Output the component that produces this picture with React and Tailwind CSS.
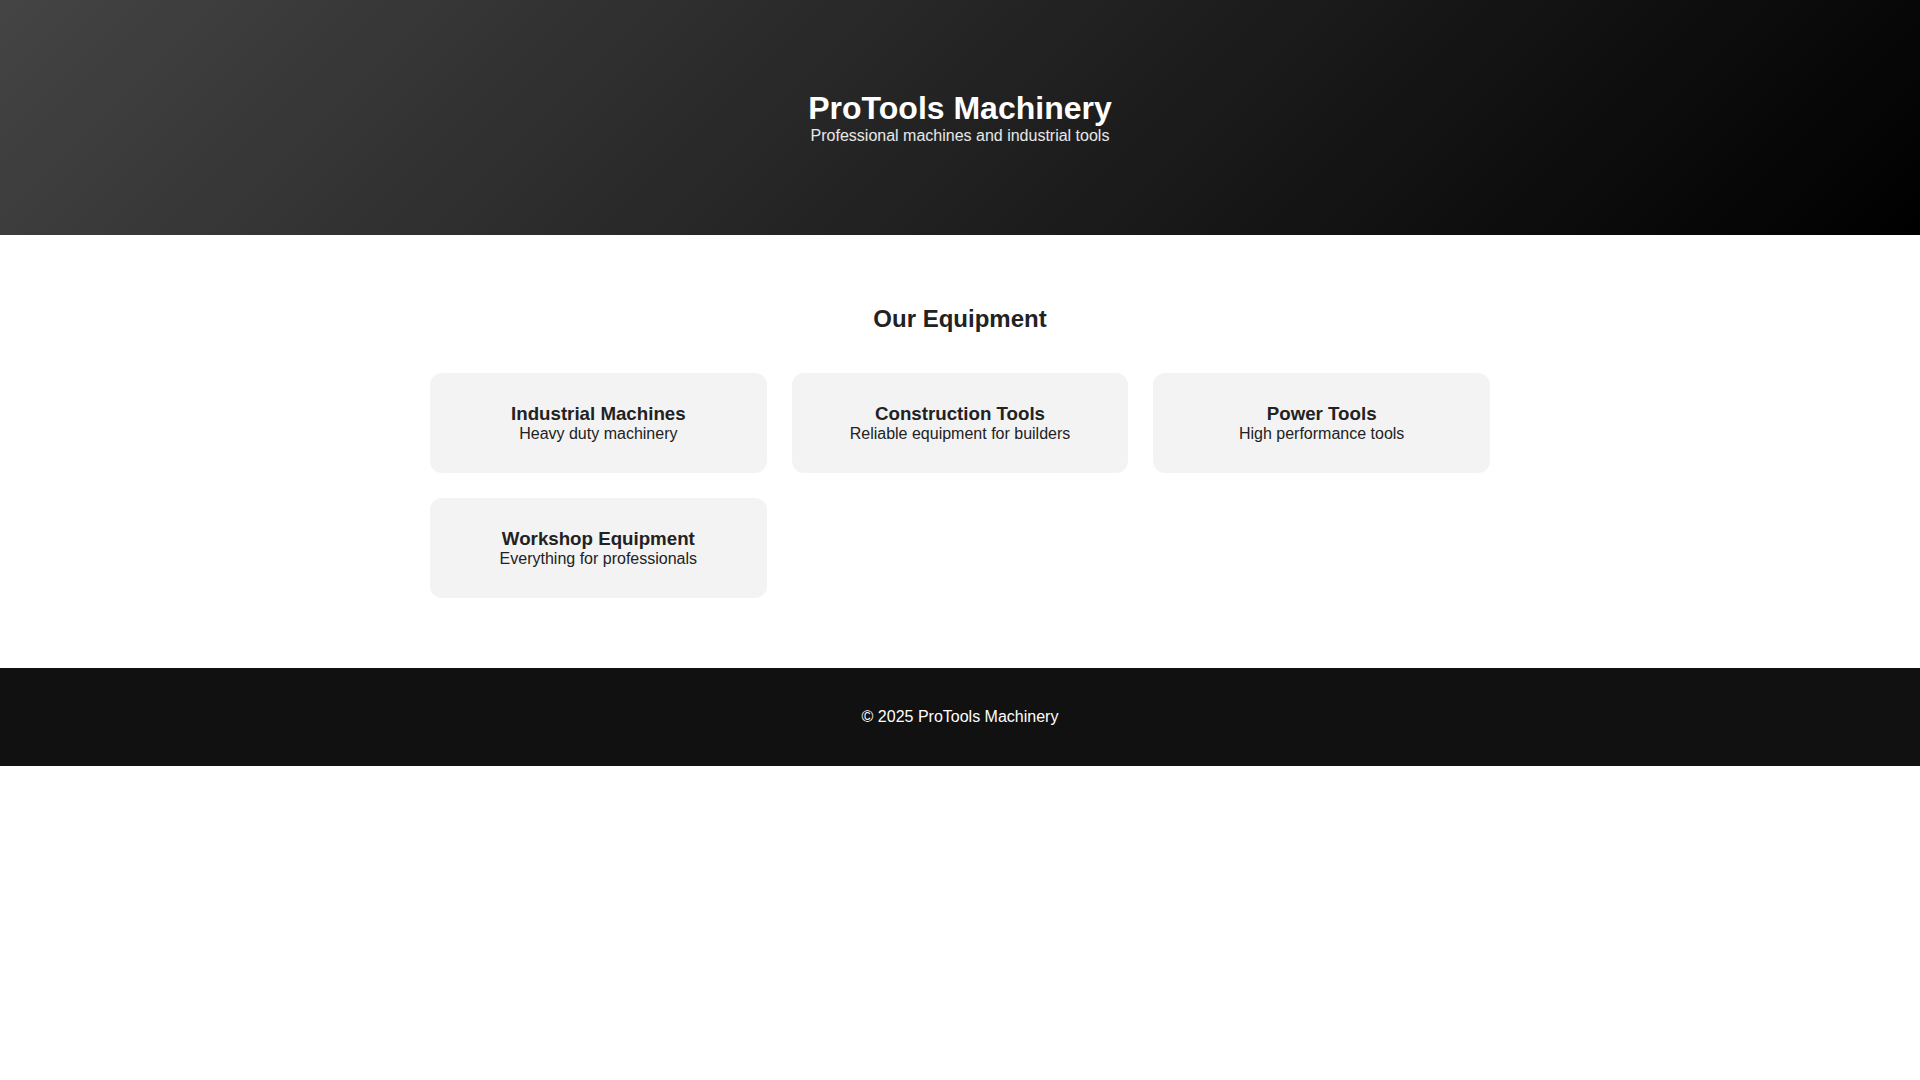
const equipment = [
  { title: 'Industrial Machines', text: 'Heavy duty machinery' },
  { title: 'Construction Tools', text: 'Reliable equipment for builders' },
  { title: 'Power Tools', text: 'High performance tools' },
  { title: 'Workshop Equipment', text: 'Everything for professionals' },
];

function EquipmentCard({ item }) {
  return (
    <div className="rounded-xl bg-[#f3f3f3] p-[30px] text-center">
      <h3 className="text-[18.72px] leading-[normal] font-bold text-[#222]">{item.title}</h3>
      <p className="text-base leading-[normal] text-[#222]">{item.text}</p>
    </div>
  );
}

export default function App() {
  return (
    <div className="min-h-screen bg-white font-['Liberation_Sans',Arial,sans-serif] text-[#222]">
      <header className="bg-[linear-gradient(135deg,#444,#000)] py-[90px] text-center text-white">
        <h1 className="text-[32px] leading-[normal] font-bold">ProTools Machinery</h1>
        <p className="text-base leading-[normal] text-white/90">Professional machines and industrial tools</p>
      </header>

      <section className="mx-auto max-w-[1100px] px-5 py-[70px]">
        <h2 className="mb-10 text-center text-2xl leading-[normal] font-bold">Our Equipment</h2>
        <div className="grid grid-cols-3 gap-[25px]">
          {equipment.map((item) => (
            <EquipmentCard key={item.title} item={item} />
          ))}
        </div>
      </section>

      <footer className="bg-[#111] py-10 text-center text-white">
        <p className="text-base leading-[normal]">© 2025 ProTools Machinery</p>
      </footer>
    </div>
  );
}
